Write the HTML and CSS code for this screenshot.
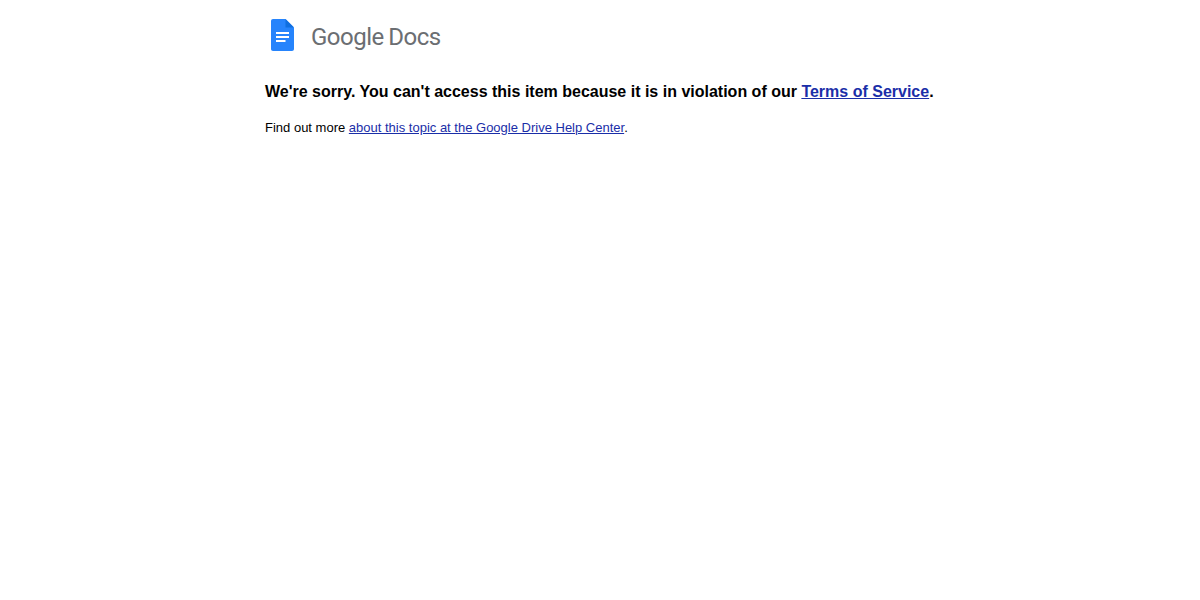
FILE: index.html
```html
<!DOCTYPE html>
<html lang="en">
<head>
    <meta charset="UTF-8">
    <title>Google Docs</title>
    <link rel="stylesheet" href="styles.css">
</head>
<body>
    <div class="page">
        <!-- Logo -->
        <div class="logo">
            <svg class="logo-icon" width="23" height="32" viewBox="0 0 23 32">
                <path d="M14.500 0H2C.9 0 0 .9 0 2v28c0 1.100.9 2 2 2h19c1.100 0 2-.9 2-2V8.500z" fill="#2684fc"/>
                <path d="M14.500 0v8.500H23z" fill="#0f6fe0"/>
                <rect x="5" y="13" width="13" height="2" fill="#fff"/>
                <rect x="5" y="17" width="13" height="2" fill="#fff"/>
                <rect x="5" y="21" width="9.500" height="2" fill="#fff"/>
            </svg>
            <span class="logo-text">Google Docs</span>
        </div>

        <h1 class="title">We're sorry. You can't access this item because it is in violation of our <a href="#">Terms of Service</a>.</h1>
        <p class="more">Find out more <a href="#">about this topic at the Google Drive Help Center</a>.</p>
    </div>
</body>
</html>
```
FILE: styles.css
```css
* {
    margin: 0;
    padding: 0;
    box-sizing: border-box;
}

body {
    font-family: "Liberation Sans", Arial, sans-serif;
    background-color: #fff;
    color: #000;
}

a {
    color: #1a2ea8;
}

.page {
    width: 670px;
    margin-left: 265px;
    padding-top: 19px;
}

/* Logo */
.logo {
    display: flex;
    align-items: center;
    height: 32px;
    padding-left: 6px;
}

.logo-text {
    margin-left: 17px;
    margin-top: 4px;
    font-family: Roboto, sans-serif;
    font-size: 24px;
    letter-spacing: -0.5px;
    word-spacing: -1px;
    color: #6b6e72;
}

.title {
    margin-top: 31px;
    font-size: 16px;
    line-height: 20px;
    font-weight: bold;
    white-space: nowrap;
}

.more {
    margin-top: 17px;
    font-size: 13px;
    line-height: 17px;
}
```
